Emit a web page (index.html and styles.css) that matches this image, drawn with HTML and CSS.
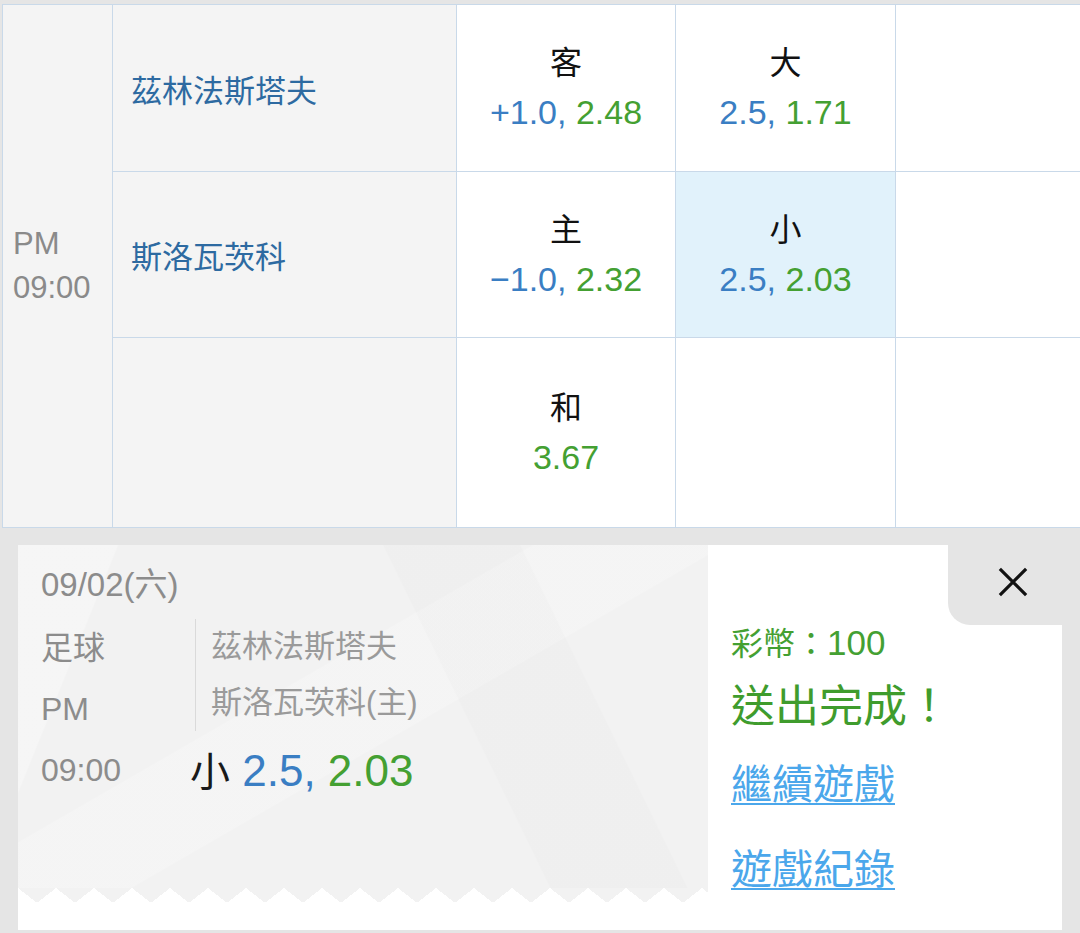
FILE: index.html
```html
<!DOCTYPE html>
<html lang="zh-Hant">
<head>
  <meta charset="UTF-8">
  <meta name="viewport" content="width=device-width, initial-scale=1.0">
  <title>投注單</title>
  <link rel="stylesheet" href="styles.css">
</head>
<body>

<div class="board">
  <div class="cell time">PM<br>09:00</div>

  <div class="cell team">茲林法斯塔夫</div>
  <div class="cell odds">
    <span class="pick">客</span>
    <span class="val"><span class="hdp">+1.0,</span> <span class="price">2.48</span></span>
  </div>
  <div class="cell odds">
    <span class="pick">大</span>
    <span class="val"><span class="hdp">2.5,</span> <span class="price">1.71</span></span>
  </div>
  <div class="cell odds"></div>

  <div class="cell team">斯洛瓦茨科</div>
  <div class="cell odds">
    <span class="pick">主</span>
    <span class="val"><span class="hdp">&minus;1.0,</span> <span class="price">2.32</span></span>
  </div>
  <div class="cell odds picked">
    <span class="pick">小</span>
    <span class="val"><span class="hdp">2.5,</span> <span class="price">2.03</span></span>
  </div>
  <div class="cell odds"></div>

  <div class="cell team"></div>
  <div class="cell odds">
    <span class="pick">和</span>
    <span class="val"><span class="price">3.67</span></span>
  </div>
  <div class="cell odds"></div>
  <div class="cell odds"></div>
</div>

<div class="slip-area">
  <div class="slip">
    <div class="stub">
      <div class="stub-body">
        <div class="date">09/02(六)</div>
        <div class="detail">
          <div class="meta">足球</div>
          <div class="teams">茲林法斯塔夫<br>斯洛瓦茨科(主)</div>
          <div class="meta">PM</div>
          <div class="meta">09:00</div>
          <div class="bet"><span class="bet-pick">小</span> <span class="hdp">2.5,</span> <span class="price">2.03</span></div>
        </div>
      </div>
      <div class="teeth"></div>
      <div class="stub-foot"></div>
    </div>

    <div class="result">
      <div class="close">
        <svg width="32" height="32" viewBox="0 0 32 32">
          <path d="M2 2 L30 30 M30 2 L2 30" stroke="#111" stroke-width="3.4" fill="none"/>
        </svg>
      </div>
      <div class="coins">彩幣：<span class="num">100</span></div>
      <div class="done">送出完成！</div>
      <a class="link link-first" href="#">繼續遊戲</a>
      <a class="link link-second" href="#">遊戲紀錄</a>
    </div>
  </div>
</div>

</body>
</html>
```

FILE: styles.css
```css
body {
  margin: 0;
  width: 1080px;
  height: 933px;
  overflow: hidden;
  background: #e5e5e5;
  font-family: "Liberation Sans", "Noto Sans CJK TC", sans-serif;
}

.board {
  display: grid;
  grid-template-columns: 109px 343px 218px 219px 1fr;
  grid-template-rows: 166px 165px 189px;
  gap: 1px;
  width: 1100px;
  margin: 4px 0 0 2px;
  background: #c9d9e9;
  border: 1px solid #c9d9e9;
}

.cell {
  background: #fff;
}

.time {
  grid-row: span 3;
  display: flex;
  flex-direction: column;
  justify-content: center;
  padding-left: 10px;
  background: #f4f4f4;
  color: #8a8a8a;
  font-size: 31px;
  line-height: 44px;
}

.team {
  display: flex;
  align-items: center;
  padding-left: 18px;
  background: #f4f4f4;
  color: #2d6aa1;
  font-size: 31px;
}

.odds {
  display: flex;
  flex-direction: column;
  justify-content: center;
  align-items: center;
}

.odds.picked {
  background: #e1f2fb;
}

.pick {
  font-size: 32px;
  line-height: 48px;
  color: #111;
}

.val {
  font-size: 34px;
  line-height: 50px;
}

.hdp {
  color: #3a7ec3;
}

.price {
  color: #44a032;
}

/* ticket */

.slip-area {
  padding: 17px 18px 0;
}

.slip {
  display: flex;
  height: 385px;
}

.stub {
  width: 690px;
  display: flex;
  flex-direction: column;
  background: #fff;
}

.stub-body {
  flex: 1;
  padding: 20px 0 0 23px;
  background:
    linear-gradient(112deg, rgba(255,255,255,0.3) 12%, transparent 12.2%),
    linear-gradient(64deg, transparent 62%, rgba(0,0,0,0.01) 62.2%, rgba(0,0,0,0.01) 78%, transparent 78.2%),
    linear-gradient(150deg, transparent 40%, rgba(255,255,255,0.2) 40.2%, rgba(255,255,255,0.2) 55%, transparent 55.2%),
    #f2f2f2;
}

.date {
  font-size: 33px;
  line-height: 40px;
  color: #8c8c8c;
}

.detail {
  display: grid;
  grid-template-columns: 149px 1fr;
  grid-template-rows: repeat(3, 61px);
  margin-top: 13px;
}

.meta {
  grid-column: 1;
  font-size: 32px;
  line-height: 61px;
  color: #8c8c8c;
}

.teams {
  grid-column: 2;
  grid-row: 1 / 3;
  align-self: start;
  margin: 1px 0 0 5px;
  padding-left: 15px;
  border-left: 1px solid #dadada;
  font-size: 31px;
  line-height: 56px;
  color: #9a9a9a;
}

.bet {
  grid-column: 2;
  grid-row: 3;
  font-size: 44px;
  line-height: 61px;
}

.bet-pick {
  font-size: 40px;
  color: #1a1a1a;
}

.teeth {
  height: 15px;
  background: conic-gradient(from 128deg at 50% 0, #fff 0 104deg, #f2f2f2 0) -19px 0 / 38px 15px repeat-x;
}

.stub-foot {
  height: 27px;
}

.result {
  width: 354px;
  display: flex;
  flex-direction: column;
  align-items: flex-start;
  background: #fff;
}

.close {
  align-self: flex-end;
  width: 114px;
  height: 80px;
  display: flex;
  justify-content: center;
  align-items: center;
  padding: 0 0 6px 16px;
  box-sizing: border-box;
  background: #e5e5e5;
  border-bottom-left-radius: 22px;
}

.close svg {
  width: 30px;
  height: 30px;
}

.coins {
  margin-left: 23px;
  font-size: 32px;
  line-height: 36px;
  color: #44a032;
}

.coins .num {
  font-size: 35px;
}

.done {
  margin: 19px 0 0 23px;
  font-size: 44px;
  line-height: 52px;
  color: #3f9c2d;
}

.link {
  margin-left: 23px;
  font-size: 41px;
  line-height: 48px;
  color: #4ba7eb;
  text-decoration: underline;
  text-decoration-thickness: 2px;
  text-underline-offset: 4px;
}

.link-first {
  margin-top: 28px;
}

.link-second {
  margin-top: 37px;
}
```
